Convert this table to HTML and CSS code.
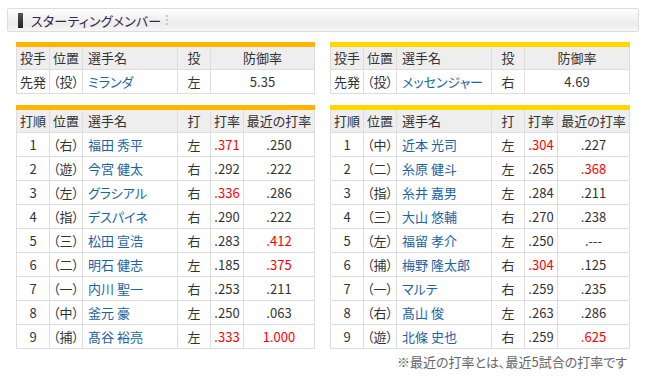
FILE: index.html
```html
<!DOCTYPE html>
<html lang="ja">
<head>
<meta charset="utf-8">
<link rel="stylesheet" href="styles.css">
</head>
<body>
<div class="page">
  <div class="heading">
    <span class="bar"></span>
    <span class="title">スターティングメンバー</span>
    <span class="dots"></span>
  </div>
  <div class="columns">
    <div class="col">
      <table class="tbl pitch left">
        <colgroup><col class="w33"><col class="w33"><col class="w95"><col class="w33"><col></colgroup>
        <tr><th>投手</th><th>位置</th><th class="l">選手名</th><th>投</th><th>防御率</th></tr>
        <tr><td>先発</td><td>（投）</td><td class="name">ミランダ</td><td>左</td><td>5.35</td></tr>
      </table>
      <table class="tbl bat left">
        <colgroup><col class="w33"><col class="w33"><col class="w95"><col class="w33"><col class="w33"><col></colgroup>
        <tr><th>打順</th><th>位置</th><th class="l">選手名</th><th>打</th><th>打率</th><th>最近の打率</th></tr>
        <tr><td>1</td><td>（右）</td><td class="name">福田 秀平</td><td>左</td><td class="red">.371</td><td>.250</td></tr>
        <tr><td>2</td><td>（遊）</td><td class="name">今宮 健太</td><td>右</td><td>.292</td><td>.222</td></tr>
        <tr><td>3</td><td>（左）</td><td class="name">グラシアル</td><td>右</td><td class="red">.336</td><td>.286</td></tr>
        <tr><td>4</td><td>（指）</td><td class="name">デスパイネ</td><td>右</td><td>.290</td><td>.222</td></tr>
        <tr><td>5</td><td>（三）</td><td class="name">松田 宣浩</td><td>右</td><td>.283</td><td class="red">.412</td></tr>
        <tr><td>6</td><td>（二）</td><td class="name">明石 健志</td><td>左</td><td>.185</td><td class="red">.375</td></tr>
        <tr><td>7</td><td>（一）</td><td class="name">内川 聖一</td><td>右</td><td>.253</td><td>.211</td></tr>
        <tr><td>8</td><td>（中）</td><td class="name">釜元 豪</td><td>左</td><td>.250</td><td>.063</td></tr>
        <tr><td>9</td><td>（捕）</td><td class="name">髙谷 裕亮</td><td>左</td><td class="red">.333</td><td class="red">1.000</td></tr>
      </table>
    </div>
    <div class="col">
      <table class="tbl pitch right">
        <colgroup><col class="w33"><col class="w33"><col class="w95"><col class="w33"><col></colgroup>
        <tr><th>投手</th><th>位置</th><th class="l">選手名</th><th>投</th><th>防御率</th></tr>
        <tr><td>先発</td><td>（投）</td><td class="name">メッセンジャー</td><td>右</td><td>4.69</td></tr>
      </table>
      <table class="tbl bat right">
        <colgroup><col class="w33"><col class="w33"><col class="w95"><col class="w33"><col class="w33"><col></colgroup>
        <tr><th>打順</th><th>位置</th><th class="l">選手名</th><th>打</th><th>打率</th><th>最近の打率</th></tr>
        <tr><td>1</td><td>（中）</td><td class="name">近本 光司</td><td>左</td><td class="red">.304</td><td>.227</td></tr>
        <tr><td>2</td><td>（二）</td><td class="name">糸原 健斗</td><td>左</td><td>.265</td><td class="red">.368</td></tr>
        <tr><td>3</td><td>（指）</td><td class="name">糸井 嘉男</td><td>左</td><td>.284</td><td>.211</td></tr>
        <tr><td>4</td><td>（三）</td><td class="name">大山 悠輔</td><td>右</td><td>.270</td><td>.238</td></tr>
        <tr><td>5</td><td>（左）</td><td class="name">福留 孝介</td><td>左</td><td>.250</td><td>.---</td></tr>
        <tr><td>6</td><td>（捕）</td><td class="name">梅野 隆太郎</td><td>右</td><td class="red">.304</td><td>.125</td></tr>
        <tr><td>7</td><td>（一）</td><td class="name">マルテ</td><td>右</td><td>.259</td><td>.235</td></tr>
        <tr><td>8</td><td>（右）</td><td class="name">髙山 俊</td><td>左</td><td>.263</td><td>.286</td></tr>
        <tr><td>9</td><td>（遊）</td><td class="name">北條 史也</td><td>右</td><td>.259</td><td class="red">.625</td></tr>
      </table>
      <p class="note">※最近の打率とは、最近5試合の打率です</p>
    </div>
  </div>
</div>
</body>
</html>
```

FILE: styles.css
```css
html, body {
  margin: 0;
  padding: 0;
  background: #fff;
}
body {
  font-family: "Noto Sans CJK JP", sans-serif;
  font-size: 13px;
  color: #333;
  font-feature-settings: "palt";
}
.page {
  padding: 8px 10px 0 7px;
  width: 632px;
}
.heading {
  height: 22px;
  border: 1px solid #dcdcdc;
  border-radius: 2px;
  background: linear-gradient(#ffffff 0%, #f3f3f3 40%, #ececec 70%, #f6f6f6 100%);
  display: flex;
  align-items: center;
  padding-left: 10px;
}
.bar {
  width: 5px;
  height: 15px;
  background: linear-gradient(#555, #222);
  margin-right: 8px;
}
.title {
  color: #33244a;
  font-size: 13px;
  line-height: 15px;
  letter-spacing: 0.2px;
}
.dots {
  width: 2px;
  height: 12px;
  margin-left: 5px;
  background: radial-gradient(circle, #c8c8c8 0.9px, transparent 1.2px) 0 0 / 2px 4px;
}
.columns {
  display: flex;
  gap: 15px;
  padding-left: 9px;
}
.col {
  display: flex;
  flex-direction: column;
}
.col:first-child { width: 299px; }
.col:last-child { width: 300px; }
.tbl {
  border-collapse: collapse;
  table-layout: fixed;
  width: 100%;
}
.pitch { margin-top: 10px; }
.bat { margin-top: 11px; }
.tbl.left { border-top: 5px solid #ffb400; }
.tbl.right { border-top: 5px solid #ffd800; }
.w33 { width: 33px; }
.w95 { width: 95px; }
.tbl tr { height: 24px; }
.tbl th, .tbl td {
  border: 1px solid #dddddd;
  padding: 0;
  text-align: center;
  white-space: nowrap;
  overflow: hidden;
  line-height: 22px;
}
.tbl th {
  background: #eeeeee;
  font-weight: normal;
  color: #333;
}
.tbl.left tr:first-child th, .tbl.right tr:first-child th { border-top: none; }
.tbl th.l { text-align: left; padding-left: 5px; }
.tbl td.name {
  text-align: left;
  padding-left: 5px;
  color: #1a64a6;
}
.tbl td.red { color: #ff0000; }
.note {
  margin: 5px 3px 0 0;
  text-align: right;
  color: #666;
  font-size: 13px;
  line-height: 16px;
}
```
